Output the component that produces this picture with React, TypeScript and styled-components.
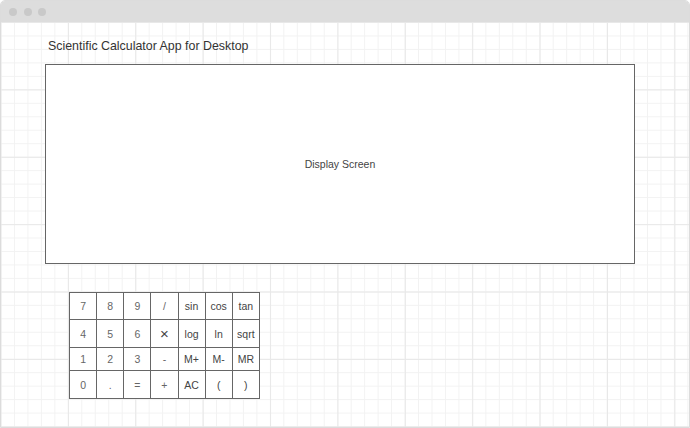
import React from "react";
import styled, { createGlobalStyle } from "styled-components";

const Global = createGlobalStyle`
  html, body { margin: 0; padding: 0; background: #ffffff; }
  body { font-family: "Liberation Sans", Arial, sans-serif; }
`;

const Window = styled.div`
  width: 690px;
  height: 428px;
  box-sizing: border-box;
  border: 1px solid #dcdcdc;
  border-radius: 5px 5px 0 0;
  overflow: hidden;
  display: flex;
  flex-direction: column;
`;

const TitleBar = styled.div`
  height: 21px;
  flex: none;
  background: #dddddd;
  display: flex;
  align-items: center;
  gap: 6.5px;
  padding-left: 8px;
`;

const Dot = styled.span`
  width: 8px;
  height: 8px;
  border-radius: 50%;
  background: #c9c9c9;
`;

const Canvas = styled.div`
  flex: 1;
  background-color: #ffffff;
  background-image:
    linear-gradient(to right, #e8e8e8 1px, transparent 1px),
    linear-gradient(to bottom, #e8e8e8 1px, transparent 1px),
    linear-gradient(to right, #f2f2f2 1px, transparent 1px),
    linear-gradient(to bottom, #f2f2f2 1px, transparent 1px);
  background-size: 67.4px 67.4px, 67.4px 67.4px, 13.48px 13.48px, 13.48px 13.48px;
  background-position: -0.5px 0, -0.5px 0, -0.5px 0, -0.5px 0;
  padding: 16px 0 0 44px;
  display: flex;
  flex-direction: column;
  align-items: flex-start;
`;

const Heading = styled.div`
  margin-left: 3px;
  font-size: 12.4px;
  line-height: 16px;
  color: #333333;
`;

const Display = styled.div`
  margin-top: 10px;
  width: 590px;
  height: 200px;
  box-sizing: border-box;
  border: 1px solid #666666;
  background: #ffffff;
  display: flex;
  align-items: center;
  justify-content: center;
  font-size: 10.5px;
  color: #444444;
`;

const Keypad = styled.div`
  margin-top: 28px;
  margin-left: 24px;
  display: grid;
  grid-template-columns: repeat(7, 26.14px);
  grid-template-rows: 26px 27px 22px 27px;
  gap: 1px;
  padding: 1px;
  background: #666666;
`;

const Key = styled.div<{ $dim?: boolean }>`
  background: #ffffff;
  display: flex;
  align-items: center;
  justify-content: center;
  font-size: 10.5px;
  color: ${(p) => (p.$dim ? "#666666" : "#444444")};
`;

const Times = styled.span`
  font-size: 15px;
  font-weight: 300;
  color: #444444;
`;

const keys: string[] = [
  "7", "8", "9", "/", "sin", "cos", "tan",
  "4", "5", "6", "×", "log", "ln", "sqrt",
  "1", "2", "3", "-", "M+", "M-", "MR",
  "0", ".", "=", "+", "AC", "(", ")",
];

export default function App() {
  return (
    <>
      <Global />
      <Window>
        <TitleBar>
          <Dot />
          <Dot />
          <Dot />
        </TitleBar>
        <Canvas>
          <Heading>Scientific Calculator App for Desktop</Heading>
          <Display>Display Screen</Display>
          <Keypad>
            {keys.map((k, i) => (
              <Key key={i} $dim={/^[0-9.=+\-/]$/.test(k)}>
                {k === "×" ? <Times>×</Times> : k}
              </Key>
            ))}
          </Keypad>
        </Canvas>
      </Window>
    </>
  );
}
